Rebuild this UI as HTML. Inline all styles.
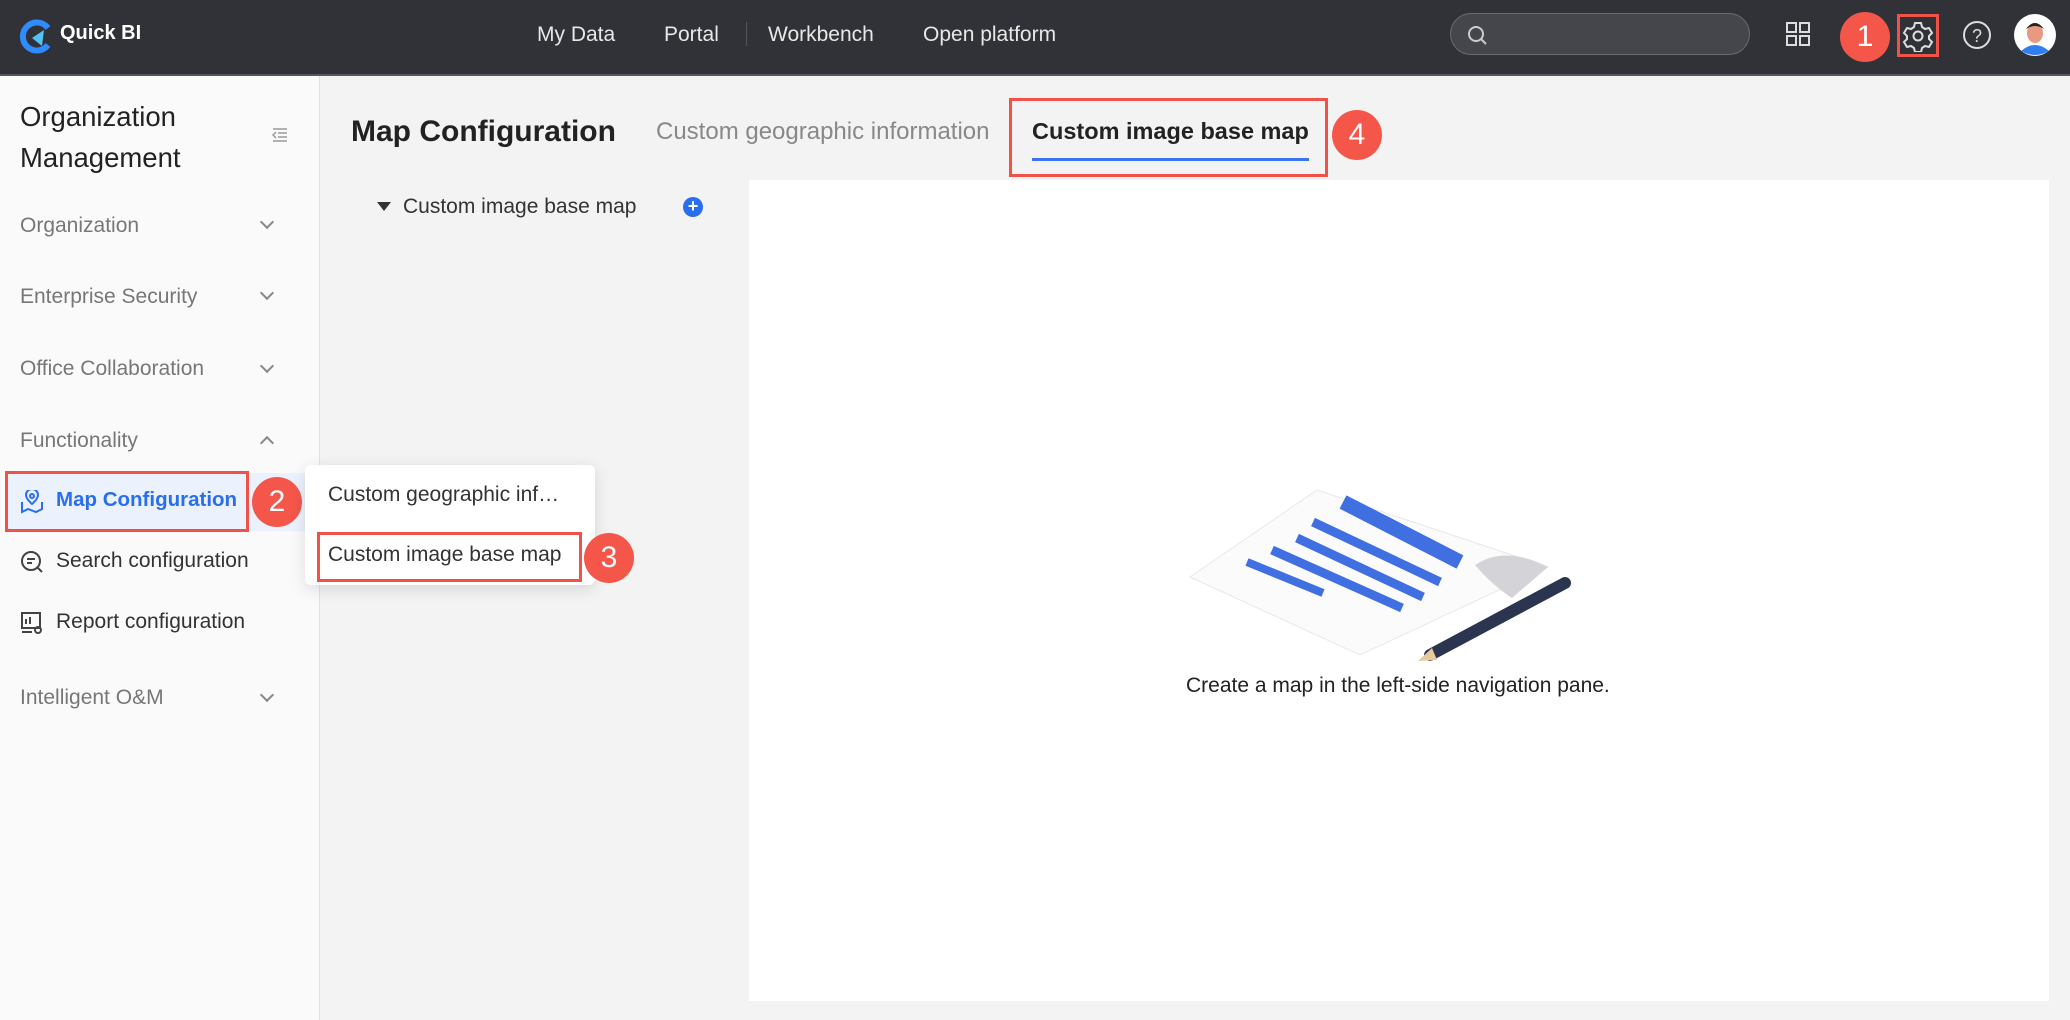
<!DOCTYPE html>
<html><head><meta charset="utf-8"><style>
*{margin:0;padding:0;box-sizing:border-box}
body{width:2070px;height:1020px;overflow:hidden;background:#f3f3f3;font-family:"Liberation Sans",Arial,sans-serif;position:relative}
.a{position:absolute;white-space:nowrap}
.hdr{left:0;top:0;width:2070px;height:76px;background:#313237;border-bottom:2px solid #55565b}
.nav{color:#e8e8e8;font-size:21px;top:23px}
.side{left:0;top:76px;width:320px;height:944px;background:#fafafa;border-right:1px solid #e2e2e2}
.mi{color:#777;font-size:21px;left:20px}
.chev{left:262px;width:10px;height:10px;border-right:2px solid #888;border-bottom:2px solid #888;transform:rotate(45deg)}
.badge{width:50px;height:50px;border-radius:50%;background:#f5564a;color:#fff;font-size:30px;text-align:center;line-height:50px}
.red{border:3px solid #f0524a}
</style></head><body>
<div class="a hdr"></div>
<svg class="a" style="left:18px;top:18px" width="36" height="36" viewBox="0 0 36 36"><path d="M30 10A14 14 0 1 0 30 27" stroke="#2f8cff" stroke-width="6" fill="none"/><path d="M14 20L26 12L24 28Z" fill="#4fc3f7"/></svg>
<div class="a" style="left:60px;top:22px;color:#fff;font-size:20px;font-weight:bold">Quick BI</div>
<div class="a nav" style="left:537px">My Data</div>
<div class="a nav" style="left:664px">Portal</div>
<div class="a" style="left:746px;top:22px;width:1px;height:24px;background:#555"></div>
<div class="a nav" style="left:768px">Workbench</div>
<div class="a nav" style="left:923px">Open platform</div>
<div class="a" style="left:1450px;top:13px;width:300px;height:42px;border-radius:21px;background:#45464b;border:1px solid #6a6b70"></div>
<svg class="a" style="left:1466px;top:24px" width="22" height="22"><circle cx="10" cy="10" r="7" stroke="#ccc" stroke-width="2" fill="none"/><path d="M15 15L20 20" stroke="#ccc" stroke-width="2"/></svg>
<svg class="a" style="left:1786px;top:22px" width="24" height="24"><g fill="none" stroke="#ddd" stroke-width="2"><rect x="1" y="1" width="9" height="9"/><rect x="14" y="1" width="9" height="9"/><rect x="1" y="14" width="9" height="9"/><rect x="14" y="14" width="9" height="9"/></g></svg>
<div class="a badge" style="left:1840px;top:12px">1</div>
<div class="a red" style="left:1897px;top:14px;width:42px;height:43px"></div>
<svg class="a" style="left:1902px;top:20px" width="32" height="32" viewBox="0 0 32 32"><path d="M13 3h6l1 4 3 2 4-1 3 5-3 3v3l3 3-3 5-4-1-3 2-1 4h-6l-1-4-3-2-4 1-3-5 3-3v-3l-3-3 3-5 4 1 3-2z" fill="none" stroke="#ddd" stroke-width="2"/><circle cx="16" cy="16" r="4.5" fill="none" stroke="#ddd" stroke-width="2"/></svg>
<svg class="a" style="left:1961px;top:19px" width="32" height="32"><circle cx="16" cy="16" r="13" fill="none" stroke="#ddd" stroke-width="2"/><text x="16" y="23" font-size="18" fill="#ddd" text-anchor="middle" font-family="Liberation Sans">?</text></svg>
<svg class="a" style="left:2013px;top:13px" width="44" height="44"><circle cx="22" cy="22" r="21" fill="#fff"/><path d="M8 38Q22 26 36 38Q22 46 8 38Z" fill="#2f7ff0"/><ellipse cx="22" cy="20" rx="8" ry="10" fill="#e89a80"/><path d="M13 16Q22 4 31 16Q22 10 13 16Z" fill="#222"/></svg>

<div class="a side"></div>
<div class="a" style="left:20px;top:96px;font-size:27.5px;color:#222;line-height:41px;font-weight:500">Organization<br>Management</div>
<svg class="a" style="left:272px;top:128px" width="16" height="14"><g stroke="#999" stroke-width="1.5"><path d="M1 1h14M6 5h9M6 9h9M1 13h14"/><path d="M4 4L1 7L4 10" fill="none"/></g></svg>
<div class="a mi" style="top:214px">Organization</div><div class="a chev" style="top:217px"></div>
<div class="a mi" style="top:285px">Enterprise Security</div><div class="a chev" style="top:288px"></div>
<div class="a mi" style="top:357px">Office Collaboration</div><div class="a chev" style="top:361px"></div>
<div class="a mi" style="top:429px">Functionality</div><div class="a chev" style="top:438px;transform:rotate(225deg)"></div>
<div class="a" style="left:7px;top:473px;width:313px;height:58px;background:#ebf1fd"></div>
<div class="a red" style="left:5px;top:471px;width:244px;height:61px"></div>
<svg class="a" style="left:20px;top:490px" width="24" height="24"><g fill="none" stroke="#2a6ef0" stroke-width="2"><path d="M12 14s-6-5-6-9a6 6 0 0 1 12 0c0 4-6 9-6 9z"/><circle cx="12" cy="6" r="2"/><path d="M2 12v10l6-3 8 3 6-3V12"/></g></svg>
<div class="a" style="left:56px;top:488px;font-size:20.5px;color:#2a6ef0;font-weight:bold">Map Configuration</div>
<div class="a badge" style="left:252px;top:477px">2</div>
<svg class="a" style="left:20px;top:550px" width="24" height="24"><g fill="none" stroke="#444" stroke-width="2"><circle cx="11" cy="11" r="9"/><path d="M7 9h8M7 13h5M18 18l4 4"/></g></svg>
<div class="a" style="left:56px;top:549px;font-size:21px;color:#333">Search configuration</div>
<svg class="a" style="left:20px;top:611px" width="24" height="24"><g fill="none" stroke="#444" stroke-width="2"><rect x="2" y="2" width="18" height="15"/><path d="M6 13V8M10 13V6M2 21h10"/><circle cx="18" cy="19" r="3"/></g></svg>
<div class="a" style="left:56px;top:610px;font-size:21px;color:#333">Report configuration</div>
<div class="a mi" style="top:686px">Intelligent O&amp;M</div><div class="a chev" style="top:690px"></div>

<div class="a" style="left:305px;top:465px;width:290px;height:120px;background:#fff;border-radius:6px;box-shadow:0 4px 16px rgba(0,0,0,.12)"></div>
<div class="a" style="left:328px;top:483px;font-size:21px;color:#333">Custom geographic inf…</div>
<div class="a red" style="left:317px;top:532px;width:265px;height:50px"></div>
<div class="a" style="left:328px;top:543px;font-size:21px;color:#333">Custom image base map</div>
<div class="a badge" style="left:584px;top:533px">3</div>

<div class="a" style="left:351px;top:115px;font-size:30px;color:#222;font-weight:bold">Map Configuration</div>
<div class="a" style="left:656px;top:118px;font-size:24px;color:#888">Custom geographic information</div>
<div class="a red" style="left:1009px;top:98px;width:319px;height:79px"></div>
<div class="a" style="left:1032px;top:118px;font-size:23.5px;color:#222;font-weight:bold">Custom image base map</div>
<div class="a" style="left:1032px;top:158px;width:277px;height:3px;background:#3a74f0"></div>
<div class="a badge" style="left:1332px;top:110px">4</div>

<div class="a" style="left:377px;top:202px;border-left:7px solid transparent;border-right:7px solid transparent;border-top:9px solid #333"></div>
<div class="a" style="left:403px;top:195px;font-size:21px;color:#333">Custom image base map</div>
<div class="a" style="left:683px;top:197px;width:20px;height:20px;border-radius:50%;background:#2a6ef0;color:#fff;font-size:18px;line-height:19px;text-align:center;font-weight:bold">+</div>

<div class="a" style="left:749px;top:180px;width:1300px;height:821px;background:#fff"></div>
<svg class="a" style="left:1180px;top:480px" width="400" height="200" viewBox="1180 480 400 200">
<path d="M1190 577L1317 490L1548 567L1360 655Z" fill="#fbfbfb" stroke="#e8e8e8"/>
<path d="M1475 565Q1505 545 1548 567L1512 598Q1492 585 1475 565Z" fill="#d4d4d8"/>
<g stroke="#3f6fe0" stroke-linecap="butt"><path d="M1343 502L1460 562" stroke-width="15"/><path d="M1313 522L1440 582" stroke-width="9"/><path d="M1297 538L1423 597" stroke-width="9"/><path d="M1272 550L1402 608" stroke-width="9"/><path d="M1247 562L1323 593" stroke-width="8"/></g>
<path d="M1430 655L1565 583" stroke="#2b3550" stroke-width="12" stroke-linecap="round"/>
<path d="M1418 661L1432 648L1437 660Z" fill="#e9c89a"/>
</svg>
<div class="a" style="left:1186px;top:674px;font-size:21px;color:#222">Create a map in the left-side navigation pane.</div>
</body></html>
